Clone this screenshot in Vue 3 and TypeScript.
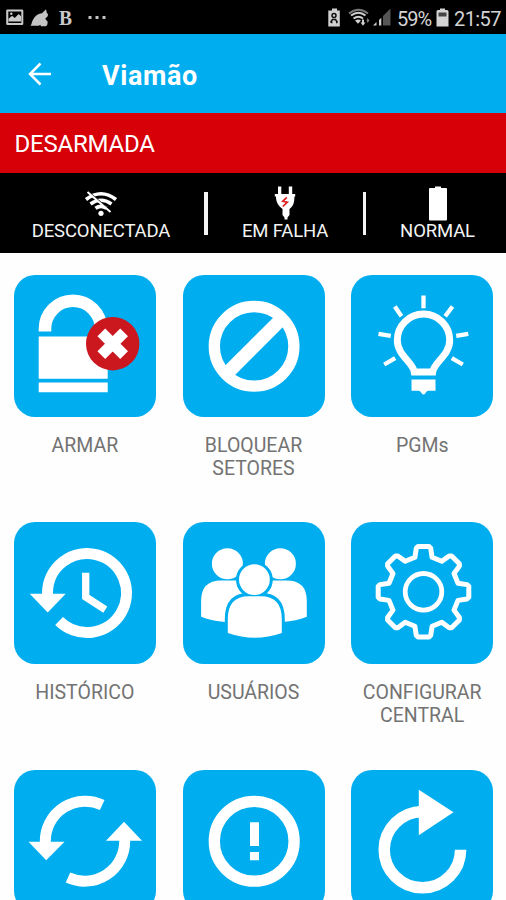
<script setup lang="ts">
interface Tile {
  id: string
  label: string[]
}

const tiles: Tile[] = [
  { id: 'arm', label: ['ARMAR'] },
  { id: 'block', label: ['BLOQUEAR', 'SETORES'] },
  { id: 'pgm', label: ['PGMs'] },
  { id: 'history', label: ['HISTÓRICO'] },
  { id: 'users', label: ['USUÁRIOS'] },
  { id: 'config', label: ['CONFIGURAR', 'CENTRAL'] },
  { id: 'sync', label: [] },
  { id: 'alert', label: [] },
  { id: 'reload', label: [] },
]

// One tooth of the gear, repeated eight times around the origin
const tooth: [number, number][] = [[-8.6, -34.5], [-7.2, -43.500], [-5.500, -45.3], [5.500, -45.3], [7.2, -43.500], [8.6, -34.5]]
const gearPoints = Array.from({ length: 8 }, (_, i) => {
  const a = (i * Math.PI) / 4
  return tooth
    .map(([x, y]) => {
      const px = x * Math.cos(a) - y * Math.sin(a)
      const py = x * Math.sin(a) + y * Math.cos(a)
      return `${px.toFixed(1)},${py.toFixed(1)}`
    })
    .join(' ')
}).join(' ')
</script>

<template>
  <div class="screen">
    <div class="statusbar">
      <svg class="notif" width="110" height="34" viewBox="0 0 110 34">
        <path fill="#c9c9c9" fill-rule="evenodd" d="M7.5 9.5h14.5a1.3 1.3 0 0 1 1.3 1.3v13a1.3 1.3 0 0 1-1.3 1.3H7.5a1.3 1.3 0 0 1-1.3-1.3v-13a1.3 1.3 0 0 1 1.3-1.3zM8.3 11.5v11.4h13V11.5z" />
        <path fill="#c9c9c9" d="M8.5 21.5v-2.8l3.6-3 2.6 2.4 4-4 2.4 2.2v5.2z" />
        <circle cx="11.3" cy="13.7" r="1.2" fill="#c9c9c9" />
        <path fill="#c4c4c4" d="M30.500 25.800c1.300-1.500 1-3.500 2.500-6 2-4 5.500-6.300 9-6.500l4-4 .8 3.500 1.200 1.500-.3 2-2.500 2.500 2.500 3-.4 3-1.300 1.500h-5l-.8-1.500-1.300 1z" />
        <text x="59" y="25" class="bold-b" textLength="13" lengthAdjust="spacingAndGlyphs">B</text>
        <g fill="#c4c4c4"><rect x="88.500" y="16" width="3" height="3" /><rect x="95.500" y="16" width="3" height="3" /><rect x="102.500" y="16" width="3" height="3" /></g>
      </svg>
      <svg class="radio" width="66" height="34" viewBox="0 0 66 34">
        <path fill="#d0d0d0" d="M4.500 10.500h1.500V8.500h5v2h2.800v16H2.300v-16z" />
        <g stroke="#111" fill="none" stroke-width="1.500"><circle cx="8" cy="15.500" r="2" /><path d="M4.500 22.500l2-3h3l2 3M5 22.500h1.500M10 22.500h1.500" /></g>
        <g fill="none" stroke="#d0d0d0" stroke-width="2"><path stroke="#777" d="M23 13.500q9.500-7.500 19 0" /><path d="M25 15.500q7.500-5.500 14.500 0M27.500 18.500q5-3.500 9.500 0" /></g>
        <path fill="#d0d0d0" d="M29 20.500q3.500-2 6 0l-3 3.200zM34.500 22.500h1.500v-3h2v3h1.500l-2.500 3.200z" />
        <path fill="#777" d="M41.500 18l2 2.500-2 2.500-1-2.500z" />
        <path fill="#d0d0d0" d="M47 25.500l3.500-3.500v3.500zM53 25.500v-5.500l2.300-2.300v7.800z" />
        <path fill="#555" d="M57 25.500v-9.500l7.500-7.500v17z" />
      </svg>
      <span class="percent">59%</span>
      <svg class="charge" width="13" height="34" viewBox="0 0 13 34">
        <path fill="#d4d4d4" d="M2 10h2V8.500h5V10h2a1.500 1.500 0 0 1 1.500 1.500v15H.5v-15A1.500 1.500 0 0 1 2 10z" />
        <path fill="#444" d="M2.500 12.500h8v4h-8z" />
      </svg>
      <span class="clock">21:57</span>
    </div>

    <header class="appbar">
      <svg class="back" width="24" height="24" viewBox="0 0 24 24">
        <path d="M23 12H2M12.500 1.500L2 12l10.500 10.500" fill="none" stroke="#fff" stroke-width="2.500" />
      </svg>
      <h1>Viamão</h1>
    </header>

    <div class="state">DESARMADA</div>

    <div class="info">
      <div class="cell first">
        <svg width="36" height="38" viewBox="0 0 36 38">
          <g fill="none" stroke="#fff" stroke-width="3.600">
            <path d="M3 14.500q15-11.500 30 0" /><path d="M7.500 19q10.500-7.500 21 0" /><path d="M12.500 23.300q5.500-3.800 11 0" />
          </g>
          <circle cx="18" cy="28.300" r="2.600" fill="#fff" />
          <path d="M7.500 8.500l21 18" stroke="#000" stroke-width="1.200" />
          <path d="M4.500 7l23 20" stroke="#fff" stroke-width="2" />
        </svg>
        <span>DESCONECTADA</span>
      </div>
      <i class="divider"></i>
      <div class="cell">
        <svg width="22" height="38" viewBox="0 0 22 38">
          <path fill="#fff" d="M4 1.500h3.300V9h7.500V1.500h3.400V9h3v2.500h-.8c0 6-.8 9.300-4.900 12.500v6l-2 2.500v2h-3v-2l-2-2.500v-6C4.400 20.800 2 17.500 2 11.500H.8V9H4z" />
          <path d="M12.800 12.300l-4 4 4.500.9-4.500 4.300" fill="none" stroke="#d22" stroke-width="1.700" />
        </svg>
        <span>EM FALHA</span>
      </div>
      <i class="divider"></i>
      <div class="cell last">
        <svg width="20" height="38" viewBox="0 0 20 38">
          <path fill="#fff" d="M7 1.500h6V3h5a1 1 0 0 1 1 1v30.500a1 1 0 0 1-1 1H2a1 1 0 0 1-1-1V4a1 1 0 0 1 1-1h5z" />
        </svg>
        <span>NORMAL</span>
      </div>
    </div>

    <main class="grid">
      <div v-for="tile in tiles" :key="tile.id" class="item">
        <svg class="tile" viewBox="0 0 142 142">
          <template v-if="tile.id === 'arm'">
            <path class="line" stroke-width="12.600" d="M31 56.500v-2.700a28 28 0 0 1 56 0v2.700" />
            <path class="solid" d="M24.700 61.500h69v42.300h-69zM24.700 107.500h69v9.700h-69z" />
            <circle cx="98.700" cy="68.700" r="26.700" fill="#cb171e" />
            <path class="line" stroke-width="11" d="M87.300 57.300l22.800 22.800M110.100 57.300L87.300 80.100" />
          </template>
          <template v-else-if="tile.id === 'block'">
            <circle class="line" cx="71.100" cy="71.300" r="39.800" stroke-width="11.300" />
            <path class="line" stroke-width="13.600" d="M43.500 98.900l55.200-55.200" />
          </template>
          <template v-else-if="tile.id === 'pgm'">
            <path class="line" stroke-width="7" d="M63.300 96.900h18.400C83 87.500 98.700 80 98.700 65.300a26.200 26.200 0 0 0-52.400 0C46.300 80 62 87.500 63.300 96.900z" />
            <path class="solid" d="M60.500 104.500h24v11.300h-6.800q-2 0-3.200 2.300-2 3-4 0-1.300-2.300-3.200-2.300h-6.800z" />
            <path class="line" stroke-width="4.300" d="M72.500 20.500v12.800M43.800 31.500l6.700 9.700M101.500 31.500l-7.300 9.700M27.500 58.800l12.300 2M117.300 58.800l-12.100 2M33.200 89.500l11-6.300M111.800 89.500l-11-6.300" />
          </template>
          <template v-else-if="tile.id === 'history'">
            <path class="line" stroke-width="11" d="M33.500 73V71.100A39.500 39.500 0 1 1 45.100 99" />
            <path class="solid" d="M15.700 71.800h36l-18 18.700z" />
            <path class="line" stroke-width="7.300" d="M71.700 50.800v24.100l19.600 12.700" />
          </template>
          <template v-else-if="tile.id === 'users'">
            <g class="solid">
              <circle cx="44.400" cy="41.800" r="15.500" />
              <circle cx="97.400" cy="41.800" r="15.500" />
              <path d="M18.100 94.800V79q0-20.500 20-20.500h26v41.500h-22q-13-1-24-5.200zM123.800 94.800V79q0-20.500-20-20.500H78v41.500h22q13-1 23.800-5.200z" />
            </g>
            <g class="cutout">
              <circle cx="71.400" cy="57.800" r="15.400" />
              <path d="M44.800 111.100V97q0-23.200 21-23.200h12q21 0 21 23.200v14.100q-27 9.500-54 0z" />
            </g>
            <g class="solid">
              <circle cx="71.400" cy="57.600" r="15.400" />
              <path d="M44.800 111.100V97q0-22.800 21-22.800h12q21 0 21 22.800v14.100q-27 9.500-54 0z" />
            </g>
          </template>
          <template v-else-if="tile.id === 'config'">
            <g transform="translate(72.500 69.800)">
              <polygon class="line round" stroke-width="5" :points="gearPoints" />
              <circle class="line" r="18.300" stroke-width="4.800" />
            </g>
          </template>
          <template v-else-if="tile.id === 'sync'">
            <path class="line" stroke-width="11" d="M31.300 74V71.200A40 40 0 0 1 88.200 34.900M110.700 68V71.200A40 40 0 0 1 54 107.500" />
            <path class="solid" d="M14.500 71.700h36L32.200 90.300zM92 70.700h36l-18-19z" />
          </template>
          <template v-else-if="tile.id === 'alert'">
            <circle class="line" cx="71.200" cy="71.200" r="39.900" stroke-width="11.300" />
            <path class="solid" d="M67 52.300h9V76h-9zM67 82h9v8.300h-9z" />
          </template>
          <template v-else>
            <path class="line" stroke-width="11.500" d="M109.600 79.700A38.200 38 0 1 1 71.400 41.700h-5" />
            <path class="solid" d="M67.800 19.700l34.700 22.600-34.700 23z" />
          </template>
        </svg>
        <div class="label">
          <span v-for="line in tile.label" :key="line">{{ line }}</span>
        </div>
      </div>
    </main>
  </div>
</template>

<style>
body {
  background: #fefefe;
  overflow: hidden;
}
</style>

<style scoped>
.screen {
  width: 506px;
  height: 900px;
  overflow: hidden;
  background: #fefefe;
  font-family: Roboto, "Liberation Sans", sans-serif;
}
.statusbar {
  height: 34px;
  background: #000;
  color: #d4d4d4;
  display: flex;
  align-items: center;
  font-size: 20px;
  line-height: 34px;
}
.notif {
  flex: none;
}
.bold-b {
  font: 700 22px "Liberation Serif", serif;
  fill: #c9c9c9;
}
.radio {
  margin-left: auto;
  flex: none;
}
.percent {
  width: 34px;
  margin: 3px 5px 0 5px;
  letter-spacing: -1px;
}
.charge {
  flex: none;
}
.clock {
  width: 47px;
  margin: 3px 5px 0 5px;
  letter-spacing: -0.6px;
}
.appbar {
  height: 79px;
  background: #00aeef;
  display: flex;
  align-items: center;
  padding-left: 28px;
  box-sizing: border-box;
}
.back {
  flex: none;
  margin-right: 50px;
}
h1 {
  margin: 4px 0 0;
  color: #fff;
  font-size: 27px;
  font-weight: 700;
  letter-spacing: 0.6px;
}
.state {
  height: 60px;
  line-height: 63px;
  background: #d80008;
  color: #fff;
  font-size: 24px;
  letter-spacing: -0.2px;
  padding-left: 14.500px;
}
.info {
  height: 80px;
  background: #000;
  color: #f4f4f4;
  display: flex;
}
.cell {
  width: 155px;
  box-sizing: border-box;
  display: flex;
  flex-direction: column;
  align-items: center;
  padding-top: 12px;
  font-size: 18.500px;
  letter-spacing: -0.150px;
  line-height: 16px;
  white-space: nowrap;
}
.cell svg {
  flex: none;
}
.first {
  width: 204px;
  padding-right: 2px;
}
.last {
  width: 140px;
  padding-left: 3px;
}
.divider {
  width: 3.500px;
  height: 43px;
  margin-top: 19px;
  background: #f4f4f4;
}
.grid {
  display: grid;
  grid-template-columns: repeat(3, 168.700px);
  grid-auto-rows: 247.700px;
  padding: 21.500px 0 0 0.500px;
}
.item {
  display: flex;
  flex-direction: column;
  align-items: center;
}
.tile {
  width: 142px;
  height: 142px;
  flex: none;
  border-radius: 21px;
  background: #00aeef;
}
.line {
  fill: none;
  stroke: #fff;
}
.round {
  stroke-linejoin: round;
}
.solid {
  fill: #fff;
}
.cutout {
  fill: #00aeef;
  stroke: #00aeef;
  stroke-width: 6px;
}
.label {
  margin-top: 17px;
  display: flex;
  flex-direction: column;
  align-items: center;
  font-size: 19.500px;
  line-height: 23px;
  color: #737373;
}
</style>
